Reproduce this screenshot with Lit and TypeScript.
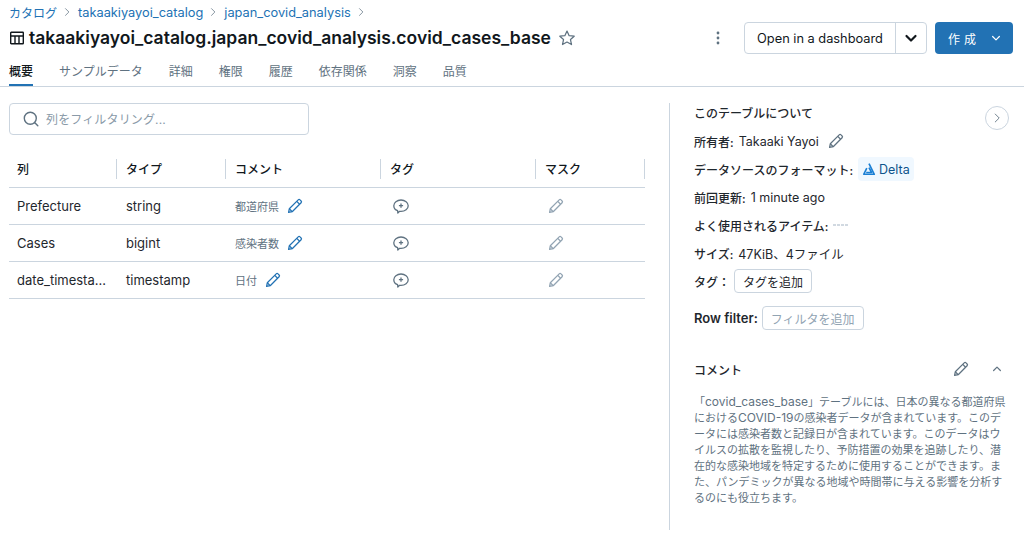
import { LitElement, html, css } from "lit";
import { customElement } from "lit/decorators.js";

const pencil = (cls: string) => html`<svg class="ic ${cls}" viewBox="0 0 16 16" fill="none" stroke="currentColor" stroke-width="1.25" stroke-linejoin="round"><path d="M1.600 14.400l.7-3.600L11.200 1.900a1.300 1.300 0 0 1 1.800 0l1.100 1.100a1.300 1.300 0 0 1 0 1.800L5.200 13.700z"/><path d="M9.800 3.400l2.800 2.800"/><path d="M2.300 10.800l2.900 2.900"/></svg>`;
const chev = (cls: string, d = "M3.500 6l4.500 4.500L12.500 6") => html`<svg class="ic ${cls}" viewBox="0 0 16 16" fill="none" stroke="currentColor" stroke-linecap="round" stroke-linejoin="round"><path d="${d}"/></svg>`;
const tagIc = html`<svg class="ic tagi" viewBox="0 0 16 16" fill="none" stroke="currentColor" stroke-width="1.300" stroke-linejoin="round"><path d="M4.600 12.700C2.300 11.800.8 9.900.8 7.700.8 4.500 4 2 8 2s7.200 2.500 7.200 5.700S12 13.400 8 13.400c-.5 0-.9 0-1.400-.1L4.800 15z"/><path d="M8 5.600v4.200M5.900 7.700h4.200" stroke-width="1.300"/></svg>`;

const rows = [
  ["Prefecture", "string", "都道府県"],
  ["Cases", "bigint", "感染者数"],
  ["date_timesta...", "timestamp", "日付"],
];

@customElement("app-root")
export class AppRoot extends LitElement {
  static styles = css`
    :host { display: block; width: 1024px; height: 542px; overflow: hidden; background: #fff; color: #11171c;
      font-family: Inter, "Noto Sans CJK JP", sans-serif; font-size: 13px; }
    * { box-sizing: border-box; }
    .ic { display: block; flex: none; }
    header { padding: 0 11px 0 9px; height: 87px; border-bottom: 1px solid #cbd5df; display: flex; flex-direction: column; }
    .crumbs { display: flex; align-items: center; height: 24px; color: #2272b4; font-size: 12.800px; }
    .crumbs .ic { width: 12px; height: 12px; color: #5f7281; margin: 0 5px 0 4px; }
    .crumbs .ja { font-size: 12px; }
    .titlerow { display: flex; align-items: center; height: 28px; }
    .titleic { width: 16px; height: 16px; color: #11171c; margin-right: 4px; }
    h1 { margin: 0; font-size: 17.500px; font-weight: 600; line-height: 28px; white-space: nowrap; }
    .star { width: 18px; height: 18px; margin-left: 7px; color: #5f7281; }
    .actions { margin-left: auto; display: flex; align-items: center; height: 32px; }
    .kebab { width: 16px; height: 16px; color: #5f7281; margin-right: 18px; }
    .split { display: flex; height: 32px; border: 1px solid #cbd5df; border-radius: 4px; }
    .split .main { width: 150px; display: flex; align-items: center; justify-content: center; font-size: 12.800px; }
    .split .more { width: 31px; border-left: 1px solid #cbd5df; display: flex; align-items: center; justify-content: center; }
    .split .more .ic { width: 16px; height: 16px; stroke-width: 2.200; }
    .create { width: 78px; height: 32px; margin-left: 8px; border-radius: 4px; background: #2272b4; color: #fff; display: flex; align-items: center; padding-left: 13px; font-size: 12px; letter-spacing: 4px; }
    .create .ic { width: 12px; height: 12px; margin-left: 10px; stroke-width: 1.600; }
    .tabs { display: flex; margin-top: 6px; height: 28px; font-size: 12px; color: #5f7281; gap: 26px; }
    .tabs div { height: 28px; padding-top: 5px; line-height: 18px; }
    .tabs .on { color: #11171c; border-bottom: 2px solid #2272b4; font-weight: 500; }
    .body { display: flex; height: 455px; }
    .left { width: 669px; padding: 16px 0 0 9px; flex: none; }
    .filter { width: 300px; height: 32px; border: 1px solid #cbd5df; border-radius: 4px; display: flex; align-items: center; padding: 0 0 1px 12px; color: #8a9aa8; font-size: 12px; letter-spacing: .15px; }
    .filter .ic { width: 18px; height: 18px; color: #5f7281; margin-right: 6px; }
    .table { width: 636px; margin-top: 17px; display: grid; grid-template-columns: 108px 109px 155px 155px 109px; }
    .hc { height: 36px; border-bottom: 1px solid #cbd5df; display: flex; align-items: center; padding: 0 0 2px 9px; font-size: 12px; font-weight: 500; position: relative; }
    .hc:first-child { padding-left: 8px; }
    .hc::after { content: ""; position: absolute; right: 0; top: 7px; height: 20px; width: 1px; background: #cbd5df; }
    .c { height: 37px; border-bottom: 1px solid #cbd5df; display: flex; align-items: center; padding-left: 9px; font-size: 13px; color: #1f272d; white-space: nowrap; }
    .c:nth-child(5n+1) { padding-left: 8px; }
    .cm { font-size: 11px; color: #5f7281; gap: 8px; }
    .cm .ic { width: 16px; height: 16px; color: #2272b4; }
    .c.tc { padding-left: 12px; }
    .tagi { width: 16px; height: 16px; color: #5f7281; }
    .c.mc { padding-left: 12px; }
    .mc .ic { width: 16px; height: 16px; color: #92a4b3; }
    .right { flex: none; width: 355px; margin-top: 16px; height: 427px; border-left: 1px solid #cbd5df; padding-left: 24px; position: relative; }
    .about { height: 18px; display: flex; align-items: center; font-size: 12px; font-weight: 500; margin-bottom: 6px; color: #1f272d; }
    .circle { position: absolute; left: 315px; top: 3px; width: 24px; height: 24px; border: 1px solid #cbd5df; border-radius: 50%; display: flex; align-items: center; justify-content: center; color: #5f7281; }
    .circle .ic { width: 14px; height: 14px; }
    .m { height: 28px; display: flex; align-items: center; font-size: 12.500px; color: #1f272d; white-space: nowrap; }
    .m b { font-weight: 500; font-size: 12px; }
    .m .v { margin-left: 5px; }
    .m .p { width: 16px; height: 16px; margin-left: 9px; color: #5f7281; }
    .delta { height: 24px; margin-left: 5px; padding: 0 4px 0 4px; background: #f0f8ff; border-radius: 4px; color: #0e538b; display: flex; align-items: center; gap: 3px; }
    .delta .ic { width: 14px; height: 14px; color: #1b7fd4; }
    .dash { margin-left: 5px; width: 15px; height: 2px; background: repeating-linear-gradient(90deg, #d1d9e1 0 3px, transparent 3px 4px); }
    .chip { height: 24px; border: 1px solid #cbd5df; border-radius: 4px; display: flex; align-items: center; padding: 0 8px; font-size: 12px; margin-left: 4px; }
    .chip.dis { color: #92a4b3; }
    .rf { margin-top: 9px; }
    .m.rf b { font-size: 13px; font-weight: 600; }
    .rf .chip { margin-left: 4px; }
    .chead { margin-top: 25px; height: 24px; display: flex; align-items: center; font-size: 12px; font-weight: 500; color: #1f272d; }
    .chead .p { width: 16px; height: 16px; margin-left: auto; color: #5f7281; }
    .chead .u { width: 12px; height: 12px; margin: 0 21px 0 22px; color: #5f7281; stroke-width: 1.600; }
    .text { margin-top: 13px; width: 316px; font-size: 11px; line-height: 16px; color: #5f7281; }
    .text span { font-size: 12px; }
  `;

  render() {
    const right = "M6 3.500L10.500 8 6 12.500";
    return html`
      <header>
        <div class="crumbs"><span class="ja">カタログ</span>${chev("", right)}<span>takaakiyayoi_catalog</span>${chev("", right)}<span>japan_covid_analysis</span>${chev("", right)}</div>
        <div class="titlerow">
          <svg class="ic titleic" viewBox="0 0 16 16" fill="none" stroke="currentColor" stroke-width="1.400"><rect x="1.700" y="2.200" width="12.600" height="11.600" rx=".6"/><path d="M1.700 6h12.600M6 6v7.800M10 6v7.800"/></svg>
          <h1>takaakiyayoi_catalog.japan_covid_analysis.covid_cases_base</h1>
          <svg class="ic star" viewBox="0 0 16 16" fill="none" stroke="currentColor" stroke-width="1.100" stroke-linejoin="round"><path d="M8 1.800l1.900 4.100 4.500.5-3.300 3 .9 4.400L8 11.600l-4 2.200.9-4.400-3.300-3 4.500-.5z"/></svg>
          <div class="actions">
            <svg class="ic kebab" viewBox="0 0 16 16" fill="currentColor"><circle cx="8" cy="3" r="1.400"/><circle cx="8" cy="8" r="1.400"/><circle cx="8" cy="13" r="1.400"/></svg>
            <div class="split"><div class="main">Open in a dashboard</div><div class="more">${chev("")}</div></div>
            <div class="create">作成${chev("")}</div>
          </div>
        </div>
        <div class="tabs">
          <div class="on">概要</div><div>サンプルデータ</div><div>詳細</div><div>権限</div><div>履歴</div><div>依存関係</div><div>洞察</div><div>品質</div>
        </div>
      </header>
      <div class="body">
        <div class="left">
          <div class="filter">
            <svg class="ic" viewBox="0 0 18 18" fill="none" stroke="currentColor" stroke-width="1.400" stroke-linecap="round"><circle cx="8.300" cy="8.300" r="6"/><path d="M12.800 12.800l3 3"/></svg>
            列をフィルタリング...
          </div>
          <div class="table">
            <div class="hc">列</div><div class="hc">タイプ</div><div class="hc">コメント</div><div class="hc">タグ</div><div class="hc">マスク</div>
            ${rows.map((r) => html`
              <div class="c">${r[0]}</div>
              <div class="c">${r[1]}</div>
              <div class="c cm">${r[2]}${pencil("")}</div>
              <div class="c tc">${tagIc}</div>
              <div class="c mc">${pencil("")}</div>`)}
          </div>
        </div>
        <div class="right">
          <div class="about">このテーブルについて</div>
          <div class="circle">${chev("", right)}</div>
          <div class="m"><b>所有者:</b><span class="v">Takaaki Yayoi</span>${pencil("p")}</div>
          <div class="m"><b>データソースのフォーマット:</b>
            <div class="delta"><svg class="ic" viewBox="0 0 16 16" fill="none" stroke="currentColor" stroke-width="1.900" stroke-linejoin="round"><path d="M8 1.800L14 14H2l3.500-7"/><path d="M8 6.500L11 12H4.800"/></svg>Delta</div></div>
          <div class="m"><b>前回更新:</b><span class="v">1 minute ago</span></div>
          <div class="m"><b>よく使用されるアイテム:</b><div class="dash"></div></div>
          <div class="m"><b>サイズ:</b><span class="v">47KiB、4ファイル</span></div>
          <div class="m"><b>タグ：</b><div class="chip">タグを追加</div></div>
          <div class="m rf"><b>Row filter:</b><div class="chip dis">フィルタを追加</div></div>
          <div class="chead">コメント${pencil("p")}${chev("u", "M3.500 10L8 5.500 12.500 10")}</div>
          <div class="text">「<span>covid_cases_base</span>」テーブルには、日本の異なる都道府県<br>における<span>COVID-19</span>の感染者データが含まれています。このデ<br>ータには感染者数と記録日が含まれています。このデータはウイルスの拡散を監視したり、予防措置の効果を追跡したり、潜在的な感染地域を特定するために使用することができます。また、パンデミックが異なる地域や時間帯に与える影響を分析するのにも役立ちます。</div>
        </div>
      </div>
    `;
  }
}
